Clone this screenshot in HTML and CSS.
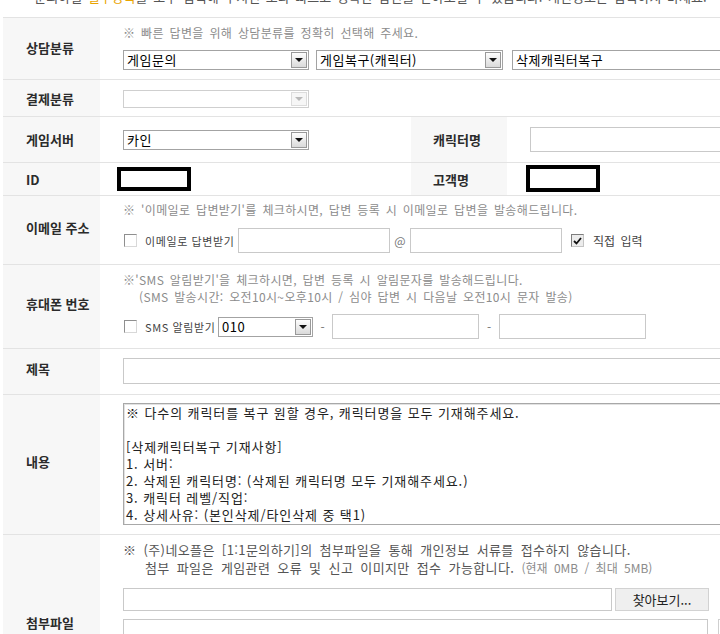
FILE: index.html
```html
<!DOCTYPE html>
<html lang="ko">
<head>
    <meta charset="UTF-8">
    <title>1:1 문의하기</title>
    <link rel="stylesheet" href="styles.css">
</head>
<body>
<div class="page">
    <p class="notice">· 문의하실 <span class="mark">필수항목</span>을 모두 입력해 주시면 보다 빠르고 정확한 답변을 받아보실 수 있습니다. 개인정보는 입력하지 마세요.</p>

    <table class="form">
        <colgroup>
            <col class="col-th"><col class="col-td"><col class="col-th2"><col>
        </colgroup>

        <tr class="row-cat">
            <th>상담분류</th>
            <td colspan="3">
                <p class="hint">※ 빠른 답변을 위해 상담분류를 정확히 선택해 주세요.</p>
                <div class="line">
                    <div class="sel w-cat1"><span>게임문의</span><i class="arr"></i></div>
                    <div class="sel w-cat2"><span>게임복구(캐릭터)</span><i class="arr"></i></div>
                    <div class="sel w-cat3"><span>삭제캐릭터복구</span><i class="arr"></i></div>
                </div>
            </td>
        </tr>

        <tr class="row-pay">
            <th>결제분류</th>
            <td colspan="3">
                <div class="sel off w-cat1"><span></span><i class="arr"></i></div>
            </td>
        </tr>

        <tr class="row-server">
            <th>게임서버</th>
            <td>
                <div class="sel w-cat1"><span>카인</span><i class="arr"></i></div>
            </td>
            <th class="th2">캐릭터명</th>
            <td><input type="text" class="ipt w-char"></td>
        </tr>

        <tr class="row-id">
            <th>ID</th>
            <td class="mask-cell"><div class="mask"></div></td>
            <th class="th2">고객명</th>
            <td class="mask-cell2"><div class="mask tall"></div></td>
        </tr>

        <tr class="row-mail">
            <th>이메일 주소</th>
            <td colspan="3">
                <p class="hint">※ '이메일로 답변받기'를 체크하시면, 답변 등록 시 이메일로 답변을 발송해드립니다.</p>
                <div class="line">
                    <span class="chk"></span>
                    <span class="chk-text w-mail">이메일로 답변받기</span>
                    <input type="text" class="ipt w-mail-id">
                    <span class="sep w-at">@</span>
                    <input type="text" class="ipt w-mail-id">
                    <span class="chk on"><svg width="9" height="8" viewBox="0 0 9 8"><path d="M1 4l2.5 2.5L8 1" fill="none" stroke="#111" stroke-width="1.8"/></svg></span>
                    <span class="chk-text direct">직접 입력</span>
                </div>
            </td>
        </tr>

        <tr class="row-phone">
            <th>휴대폰 번호</th>
            <td colspan="3">
                <p class="hint tall">※'SMS 알림받기'을 체크하시면, 답변 등록 시 알림문자를 발송해드립니다.</p>
                <p class="hint tall indent">(SMS 발송시간: 오전10시~오후10시 / 심야 답변 시 다음날 오전10시 문자 발송)</p>
                <div class="line">
                    <span class="chk"></span>
                    <span class="chk-text w-sms">SMS 알림받기</span>
                    <div class="sel w-tel"><span>010</span><i class="arr"></i></div>
                    <span class="sep w-dash1">-</span>
                    <input type="text" class="ipt w-tel-num">
                    <span class="sep w-dash2">-</span>
                    <input type="text" class="ipt w-tel-num">
                </div>
            </td>
        </tr>

        <tr class="row-title">
            <th>제목</th>
            <td colspan="3"><input type="text" class="ipt w-title"></td>
        </tr>

        <tr class="row-body">
            <th>내용</th>
            <td colspan="3">
<textarea class="memo">※ 다수의 캐릭터를 복구 원할 경우, 캐릭터명을 모두 기재해주세요.

[삭제캐릭터복구 기재사항]
1. 서버:
2. 삭제된 캐릭터명: (삭제된 캐릭터명 모두 기재해주세요.)
3. 캐릭터 레벨/직업:
4. 상세사유: (본인삭제/타인삭제 중 택1)</textarea>
            </td>
        </tr>

        <tr class="row-file">
            <th>첨부파일</th>
            <td colspan="3">
                <p class="file-note">※ (주)네오플은 [1:1문의하기]의 첨부파일을 통해 개인정보 서류를 접수하지 않습니다.</p>
                <p class="file-note indent">첨부 파일은 게임관련 오류 및 신고 이미지만 접수 가능합니다. <span class="size">(현재 0MB / 최대 5MB)</span></p>
                <div class="line file-line">
                    <input type="text" class="ipt w-file">
                    <button type="button" class="btn-find">찾아보기...</button>
                </div>
                <div class="line file-line">
                    <input type="text" class="ipt w-file-list">
                    <span class="side-box"></span>
                </div>
                <div class="line file-line">
                    <input type="text" class="ipt w-file">
                    <button type="button" class="btn-find">찾아보기...</button>
                </div>
            </td>
        </tr>
    </table>
</div>
</body>
</html>
```

FILE: styles.css
```css
* {
    box-sizing: border-box;
}

html, body {
    overflow: hidden;
}

body {
    margin: 0;
    background: #fff;
    color: #333;
    font-family: "Noto Sans CJK KR", "Noto Sans", sans-serif;
    font-size: 12px;
}

.page {
    width: 820px;
    margin-left: 3px;
}

.notice {
    margin: -12px 0 0;
    padding-left: 22px;
    height: 29px;
    font-size: 13px;
    line-height: 17px;
    color: #555;
    word-spacing: 2px;
    white-space: nowrap;
}

.notice .mark {
    color: #e9a400;
}

/* form table */
.form {
    width: 100%;
    table-layout: fixed;
    border-collapse: separate;
    border-spacing: 0;
    border-top: 1px solid #e3e3e3;
}

.col-th { width: 97px; }
.col-td { width: 311px; }
.col-th2 { width: 96px; }

.form th,
.form td {
    border-bottom: 1px solid #e3e3e3;
    vertical-align: middle;
    text-align: left;
}

.form th {
    padding: 0 0 0 23px;
    background: #f7f7f7;
    font-size: 13px;
    font-weight: bold;
    color: #2b2b2b;
    white-space: nowrap;
}

.form th.th2 {
    padding-left: 22px;
}

.form td {
    padding: 0 0 0 23px;
}

.row-cat th { padding-bottom: 2px; }
.row-mail th,
.row-phone th,
.row-title th,
.row-body th { padding-bottom: 6px; }

.row-cat td { padding-top: 7px; padding-bottom: 9px; }
.row-pay td { padding-top: 10px; padding-bottom: 8px; }
.row-server td { padding-top: 10px; padding-bottom: 10px; }
.row-id td.mask-cell { padding: 4px 0 4px 17px; }
.row-id td.mask-cell2 { padding: 2px 0 3px 19px; }
.row-mail td { padding-top: 6px; padding-bottom: 11px; }
.row-phone td { padding-top: 6px; padding-bottom: 9px; }
.row-title td { padding-top: 9px; padding-bottom: 10px; }
.row-body td { padding-top: 8px; padding-bottom: 9px; }
.row-file td { padding-top: 6px; padding-bottom: 36px; }

.hint {
    margin: 0 0 9px;
    font-size: 12px;
    line-height: 16px;
    color: #8c8c8c;
    letter-spacing: 0.35px;
    word-spacing: 2px;
    white-space: nowrap;
}

.row-mail .hint {
    margin-bottom: 10px;
}

.hint.tall {
    margin: 0;
    line-height: 17px;
}

.hint.tall.indent {
    padding-left: 16px;
    margin-bottom: 9px;
}

.line {
    display: flex;
    align-items: center;
}

/* select boxes */
.sel {
    display: flex;
    align-items: center;
    height: 20px;
    padding: 0 1px 0 3px;
    border: 1px solid #a3a3a3;
    background: #fff;
    font-size: 13px;
    color: #000;
    flex: none;
}

.sel span {
    flex: 1;
    line-height: 18px;
    letter-spacing: 0.5px;
    white-space: nowrap;
    overflow: hidden;
}

.sel .arr {
    position: relative;
    width: 16px;
    height: 16px;
    border: 1px solid #999;
    background: linear-gradient(#fdfdfd, #dadada);
}

.sel .arr::after {
    content: "";
    position: absolute;
    left: 3px;
    top: 5px;
    border-left: 4px solid transparent;
    border-right: 4px solid transparent;
    border-top: 4px solid #111;
}

.sel.off {
    height: 18px;
    border-color: #cfcfcf;
}

.sel.off .arr {
    height: 14px;
    border-color: #dcdcdc;
    background: #f6f6f6;
}

.sel.off .arr::after {
    top: 4px;
    border-top-color: #b9b9b9;
}

.w-cat1 { width: 186px; }
.w-cat2 { width: 187px; margin-left: 7px; }
.w-cat3 { width: 240px; margin-left: 9px; }
.w-tel { width: 95px; }

/* text inputs */
.ipt {
    display: block;
    height: 25px;
    margin: 0;
    padding: 0 3px;
    border: 1px solid #c9c9c9;
    background: #fff;
    font-family: inherit;
    font-size: 12px;
    flex: none;
}

.w-char { width: 200px; }
.w-mail-id { width: 152px; }
.w-tel-num { width: 147px; }
.w-title { width: 620px; height: 26px; }
.w-file { width: 489px; height: 23px; }
.w-file-list { width: 585px; height: 23px; }

.mask {
    width: 74px;
    height: 24px;
    border: 4px solid #000;
    background: #fff;
}

.mask.tall {
    height: 27px;
}

/* checkboxes */
.chk {
    display: flex;
    align-items: center;
    justify-content: center;
    width: 13px;
    height: 13px;
    margin-left: 1px;
    border: 1px solid;
    border-color: #8f8f8f #d8d8d8 #d8d8d8 #8f8f8f;
    background: #fff;
    flex: none;
}

.chk.on {
    margin-left: 9px;
    border-color: #7d7d7d #c4c4c4 #c4c4c4 #7d7d7d;
    background: #ececec;
}

.chk-text {
    padding-left: 8px;
    font-size: 11px;
    letter-spacing: 0.6px;
    color: #444;
    white-space: nowrap;
    flex: none;
}

.w-mail { width: 101px; }
.w-sms { width: 81px; }

.chk-text.direct {
    padding-left: 9px;
    font-size: 12px;
    letter-spacing: 0;
    word-spacing: 2px;
}

.sep {
    flex: none;
    text-align: center;
    font-size: 12px;
    color: #777;
}

.w-at { width: 20px; }
.w-dash1 { width: 19px; }
.w-dash2 { width: 20px; }

/* content */
.memo {
    display: block;
    width: 640px;
    height: 122px;
    margin: 0;
    padding: 0 2px;
    border: 1px solid #a8a8a8;
    box-shadow: inset 1px 1px 0 #e2e2e2;
    font-family: inherit;
    font-size: 13px;
    line-height: 17px;
    letter-spacing: 0.9px;
    color: #222;
    resize: none;
    overflow: hidden;
    white-space: pre;
}

/* attachments */
.file-note {
    margin: 0;
    font-size: 13px;
    line-height: 18px;
    letter-spacing: 0.4px;
    color: #555;
    word-spacing: 3px;
    white-space: nowrap;
}

.file-note.indent {
    padding-left: 22px;
    margin-bottom: 11px;
}

.file-note .size {
    font-size: 12px;
    letter-spacing: 0;
    color: #8c8c8c;
}

.file-line + .file-line {
    margin-top: 8px;
}

.btn-find {
    width: 94px;
    height: 23px;
    margin-left: 3px;
    padding: 0;
    border: 1px solid #d2d2d2;
    background: #efefef;
    font-family: inherit;
    font-size: 13px;
    color: #222;
    flex: none;
}

.side-box {
    width: 30px;
    height: 23px;
    margin-left: 10px;
    border: 1px solid #cfcfcf;
    flex: none;
}
```
